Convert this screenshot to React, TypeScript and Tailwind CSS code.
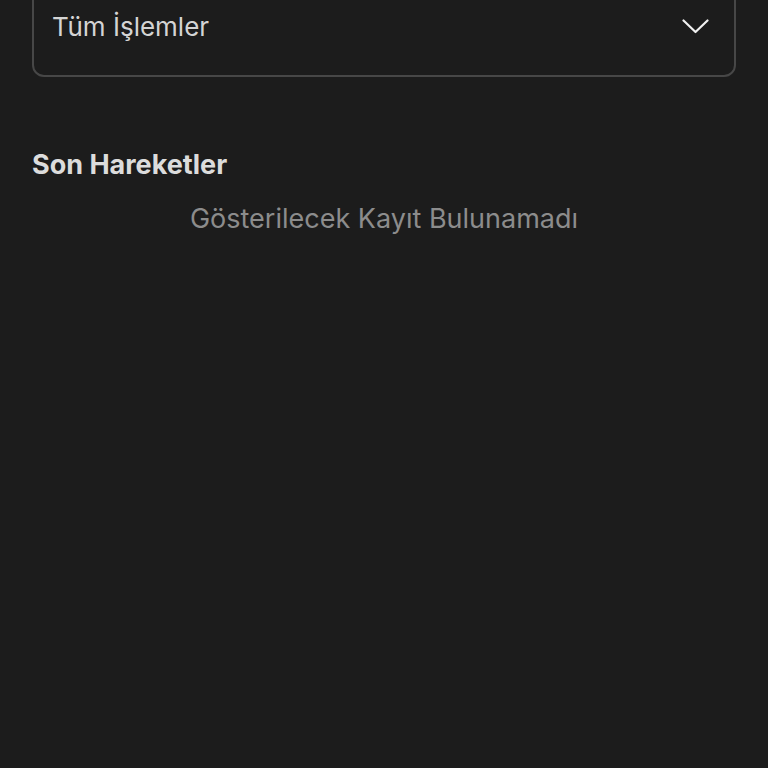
export default function App() {
  return (
    <div
      className="min-h-[768px] w-full bg-[#1c1c1c] px-8 overflow-hidden"
      style={{ fontFamily: "Inter, 'Noto Sans', sans-serif" }}
    >
      {/* Filtre seçici */}
      <div className="-mt-6 flex h-[101px] items-center justify-between rounded-xl border-2 border-[#474747] pl-[18px] pr-[25px]">
        <span className="text-[26px] leading-none text-[#d4d4d4]">Tüm İşlemler</span>
        <svg width="27" height="15" viewBox="0 0 27 15" fill="none">
          <polyline
            points="1.5,1.5 13.5,13 25.5,1.5"
            stroke="#f0f0f0"
            strokeWidth="2.2"
            strokeLinecap="round"
            strokeLinejoin="round"
          />
        </svg>
      </div>

      {/* Son hareketler */}
      <h2 className="mt-[74px] text-[27px] font-bold leading-none text-[#dcdcdc]">Son Hareketler</h2>
      <p className="mt-[27px] text-center text-[27px] leading-none text-[#8c8c8c]">
        Gösterilecek Kayıt Bulunamadı
      </p>
    </div>
  );
}
